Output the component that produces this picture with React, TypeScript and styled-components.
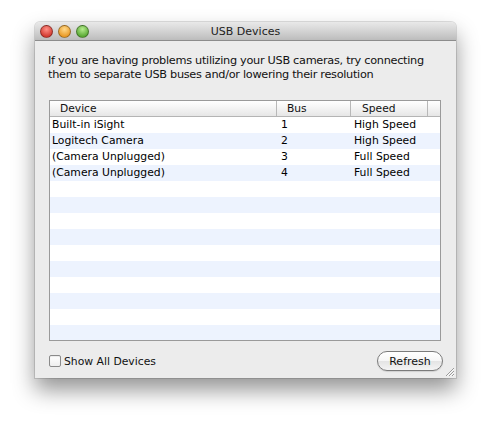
import styled, { createGlobalStyle } from 'styled-components';

const GlobalStyle = createGlobalStyle`
  html, body {
    margin: 0;
    padding: 0;
    background: #ffffff;
  }
  body {
    font-family: "DejaVu Sans", "Liberation Sans", sans-serif;
    color: #000;
  }
`;

const Page = styled.div`
  width: 490px;
  height: 424px;
  padding: 22px 0 0 35px;
  box-sizing: border-box;
`;

const Window = styled.div`
  width: 421px;
  height: 356px;
  display: flex;
  flex-direction: column;
  background: #ececec;
  border-radius: 5px 5px 0 0;
  box-shadow: 0 12px 22px rgba(0, 0, 0, 0.42), 0 0 0 1px rgba(0, 0, 0, 0.12);
  position: relative;
  overflow: hidden;
`;

const TitleBar = styled.div`
  height: 18px;
  flex-shrink: 0;
  display: flex;
  align-items: center;
  position: relative;
  background: linear-gradient(#e9e9e9, #cfcfcf 60%, #bcbcbc);
  border-bottom: 1px solid #8c8c8c;
  padding-left: 5px;
`;

const Lights = styled.div`
  display: flex;
  gap: 5px;
`;

const Light = styled.div<{ $c1: string; $c2: string }>`
  width: 13px;
  height: 13px;
  border-radius: 50%;
  box-sizing: border-box;
  border: 1px solid rgba(0, 0, 0, 0.35);
  background: radial-gradient(circle at 50% 30%, ${(p) => p.$c1} 0%, ${(p) => p.$c2} 75%);
`;

const Title = styled.div`
  position: absolute;
  left: 0;
  right: 0;
  text-align: center;
  font-size: 11px;
  color: #222;
`;

const Body = styled.div`
  flex: 1;
  display: flex;
  flex-direction: column;
  padding: 13px 15px 0 13px;
`;

const Message = styled.p`
  margin: 0;
  font-size: 11.3px;
  line-height: 14px;
  letter-spacing: -0.3px;
  white-space: nowrap;
  color: #111;
`;

const Table = styled.div`
  margin: 18px 0 0 1px;
  height: 241px;
  flex-shrink: 0;
  box-sizing: border-box;
  border: 1px solid #9a9a9a;
  background: #fff;
  display: flex;
  flex-direction: column;
  overflow: hidden;
`;

const cols = '227px 74px 77px 1fr';

const HeaderRow = styled.div`
  display: grid;
  grid-template-columns: ${cols};
  height: 15px;
  flex-shrink: 0;
  background: linear-gradient(#ffffff, #f3f3f3 50%, #e6e6e6);
  border-bottom: 1px solid #b4b4b4;
`;

const HeaderCell = styled.div<{ $pad: number }>`
  font-size: 10.7px;
  line-height: 15px;
  padding-left: ${(p) => p.$pad}px;
  border-right: 1px solid #b8b8b8;
  color: #111;
  &:last-child {
    border-right: none;
  }
`;

const Row = styled.div<{ $alt: boolean }>`
  display: grid;
  grid-template-columns: ${cols};
  height: 16px;
  flex-shrink: 0;
  background: ${(p) => (p.$alt ? '#edf3fe' : '#ffffff')};
`;

const Cell = styled.div<{ $pad: number }>`
  font-size: 10.8px;
  line-height: 16px;
  padding-left: ${(p) => p.$pad}px;
  white-space: nowrap;
  color: #000;
`;

const Footer = styled.div`
  display: flex;
  align-items: center;
  justify-content: space-between;
  margin-top: 10px;
  padding-left: 1px;
`;

const CheckLabel = styled.label`
  display: flex;
  align-items: center;
  gap: 3px;
  font-size: 10.8px;
  color: #111;
`;

const Box = styled.span`
  width: 12px;
  height: 12px;
  box-sizing: border-box;
  border: 1px solid #8a8a8a;
  border-radius: 2px;
  background: linear-gradient(#ffffff, #eeeeee);
  box-shadow: inset 0 1px 1px rgba(0, 0, 0, 0.08);
`;

const Button = styled.button`
  width: 66px;
  height: 20px;
  margin-right: -2px;
  border-radius: 10px;
  border: 1px solid #7b7b7b;
  background: linear-gradient(#ffffff, #f6f6f6 50%, #e4e4e4 51%, #f4f4f4);
  font-family: "DejaVu Sans", "Liberation Sans", sans-serif;
  font-size: 11px;
  color: #111;
  padding: 0;
  box-shadow: 0 1px 1px rgba(0, 0, 0, 0.12);
`;

const Grip = styled.svg`
  position: absolute;
  right: 1px;
  bottom: 1px;
`;

const devices = [
  { name: 'Built-in iSight', bus: '1', speed: 'High Speed' },
  { name: 'Logitech Camera', bus: '2', speed: 'High Speed' },
  { name: '(Camera Unplugged)', bus: '3', speed: 'Full Speed' },
  { name: '(Camera Unplugged)', bus: '4', speed: 'Full Speed' },
];

const TOTAL_ROWS = 14;

export default function App() {
  const rows = Array.from({ length: TOTAL_ROWS }, (_, i) => devices[i] || null);

  return (
    <Page>
      <GlobalStyle />
      <Window>
        <TitleBar>
          <Lights>
            <Light $c1="#ff8f86" $c2="#d23a30" />
            <Light $c1="#ffd98a" $c2="#e99a26" />
            <Light $c1="#b6ec8e" $c2="#5aa935" />
          </Lights>
          <Title>USB Devices</Title>
        </TitleBar>

        <Body>
          <Message>
            If you are having problems utilizing your USB cameras, try connecting
            <br />
            them to separate USB buses and/or lowering their resolution
          </Message>

          <Table>
            <HeaderRow>
              <HeaderCell $pad={10}>Device</HeaderCell>
              <HeaderCell $pad={10}>Bus</HeaderCell>
              <HeaderCell $pad={11}>Speed</HeaderCell>
              <HeaderCell $pad={0} />
            </HeaderRow>
            {rows.map((d, i) => (
              <Row key={i} $alt={i % 2 === 1}>
                <Cell $pad={2}>{d?.name}</Cell>
                <Cell $pad={4}>{d?.bus}</Cell>
                <Cell $pad={3}>{d?.speed}</Cell>
                <Cell $pad={0} />
              </Row>
            ))}
          </Table>

          <Footer>
            <CheckLabel>
              <Box />
              Show All Devices
            </CheckLabel>
            <Button>Refresh</Button>
          </Footer>
        </Body>

        <Grip width="11" height="11" viewBox="0 0 11 11">
          <path d="M10 2 L2 10 M10 5 L5 10 M10 8 L8 10" stroke="#9a9a9a" strokeWidth="1" />
          <path d="M10 3 L3 10 M10 6 L6 10 M10 9 L9 10" stroke="#fafafa" strokeWidth="1" />
        </Grip>
      </Window>
    </Page>
  );
}
